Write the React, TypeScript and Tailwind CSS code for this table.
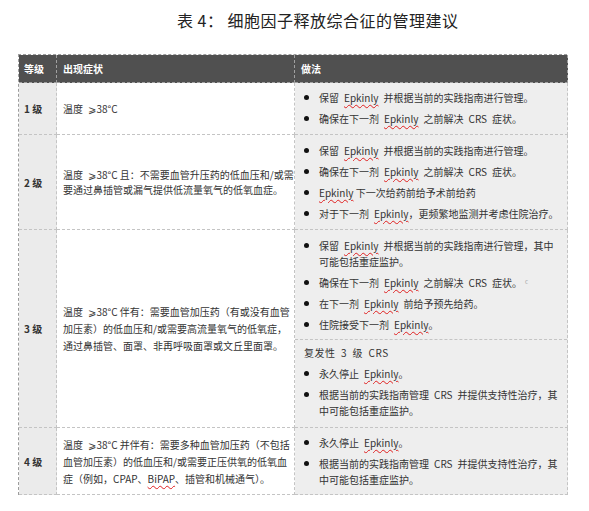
import React from "react";

const FONT = { fontFamily: '"Noto Sans CJK SC", "DejaVu Sans", sans-serif' };

const Ep = ({ children = "Epkinly" }: { children?: React.ReactNode }) => (
  <span className="underline decoration-wavy decoration-[#e02020] decoration-1 underline-offset-[2px]">
    {children}
  </span>
);

const S = "\u2002";

const Bullet = ({ children }: { children: React.ReactNode }) => (
  <div className="flex items-start">
    <div className="w-[24px] shrink-0 pl-[9px] h-[15px] flex items-center">
      <div className="w-[5px] h-[5px] rounded-full bg-[#111]" />
    </div>
    <div className="whitespace-nowrap leading-[16px]">{children}</div>
  </div>
);

const cellBase = "border-r border-b border-dashed border-[#c4c4c4]";
const c1 = `${cellBase} bg-[#ebebeb] flex items-center pl-[5px] font-bold text-[#333]`;
const c2 = `${cellBase} bg-white flex items-center pl-[6px] text-[#333]`;
const c3 = `${cellBase} bg-[#eeeeee] flex flex-col justify-center gap-[5px] text-[#333]`;

export default function App() {
  return (
    <div className="w-[589px] h-[511px] bg-white text-[10px]" style={FONT}>
      <div className="pl-[177px] pt-[8px] text-[16px] leading-[24px] tracking-[0.5px] text-[#222]">
        表 4： 细胞因子释放综合征的管理建议
      </div>
      <div className="mt-[22px] ml-[18px] w-[549px] grid grid-cols-[38px_238px_273px] grid-rows-[28px_52px_95px_198px_67px] border-l border-t border-dashed border-[#9c9c9c]">
        {/* header */}
        <div className="bg-[#505050] border-r border-b border-dashed border-[#a0a0a0] flex items-center pl-[5px] text-white font-bold">
          等级
        </div>
        <div className="bg-[#505050] border-r border-b border-dashed border-[#a0a0a0] flex items-center pl-[6px] text-white font-bold">
          出现症状
        </div>
        <div className="bg-[#505050] border-r border-b border-dashed border-[#a0a0a0] flex items-center pl-[6px] text-white font-bold">
          做法
        </div>

        {/* row 1 */}
        <div className={c1}>1 级</div>
        <div className={c2}>温度{S}⩾38°C</div>
        <div className={c3}>
          <Bullet>保留{S}<Ep />{S}并根据当前的实践指南进行管理。</Bullet>
          <Bullet>确保在下一剂{S}<Ep />{S}之前解决{S}CRS{S}症状。</Bullet>
        </div>

        {/* row 2 */}
        <div className={c1}>2 级</div>
        <div className={c2}>
          <div className="leading-[15px] whitespace-nowrap">
            <div>温度{S}⩾38°C 且：不需要血管升压药的低血压和/或需</div>
            <div>要通过鼻插管或漏气提供低流量氧气的低氧血症。</div>
          </div>
        </div>
        <div className={c3}>
          <Bullet>保留{S}<Ep />{S}并根据当前的实践指南进行管理。</Bullet>
          <Bullet>确保在下一剂{S}<Ep />{S}之前解决{S}CRS{S}症状。</Bullet>
          <Bullet><Ep /> 下一次给药前给予术前给药</Bullet>
          <Bullet>对于下一剂{S}<Ep />，更频繁地监测并考虑住院治疗。</Bullet>
        </div>

        {/* row 3 */}
        <div className={c1}>3 级</div>
        <div className={c2}>
          <div className="leading-[17px] whitespace-nowrap">
            <div>温度{S}⩾38°C 伴有：需要血管加压药（有或没有血管</div>
            <div>加压素）的低血压和/或需要高流量氧气的低氧症，</div>
            <div>通过鼻插管、面罩、非再呼吸面罩或文丘里面罩。</div>
          </div>
        </div>
        <div className="border-r border-b border-dashed border-[#c4c4c4] bg-[#eeeeee] flex flex-col text-[#333]">
          <div className="h-[110px] border-b border-dashed border-[#c4c4c4] flex flex-col justify-center gap-[5px] pt-[1px]">
            <Bullet>
              保留{S}<Ep />{S}并根据当前的实践指南进行管理，其中
              <br />
              可能包括重症监护。
            </Bullet>
            <Bullet>
              确保在下一剂{S}<Ep />{S}之前解决{S}CRS{S}症状。
              <sup className="text-[6px] text-[#aaa] ml-[3px]">c</sup>
            </Bullet>
            <Bullet>在下一剂{S}<Ep />{S}前给予预先给药。</Bullet>
            <Bullet>住院接受下一剂{S}<Ep />。</Bullet>
          </div>
          <div className="flex-1 flex flex-col justify-center gap-[5px] pb-[4px]">
            <div className="pl-[9px] leading-[16px] tracking-[0.5px]">复发性{S}3{S}级{S}CRS</div>
            <Bullet>永久停止{S}<Ep />。</Bullet>
            <Bullet>
              根据当前的实践指南管理{S}CRS{S}并提供支持性治疗，其
              <br />
              中可能包括重症监护。
            </Bullet>
          </div>
        </div>

        {/* row 4 */}
        <div className={c1}>4 级</div>
        <div className={c2}>
          <div className="leading-[17px] whitespace-nowrap">
            <div>温度{S}⩾38°C 并伴有：需要多种血管加压药（不包括</div>
            <div>血管加压素）的低血压和/或需要正压供氧的低氧血</div>
            <div>症（例如，CPAP、<Ep>BiPAP</Ep>、插管和机械通气）。</div>
          </div>
        </div>
        <div className={c3}>
          <Bullet>永久停止{S}<Ep />。</Bullet>
          <Bullet>
            根据当前的实践指南管理{S}CRS{S}并提供支持性治疗，其
            <br />
            中可能包括重症监护。
          </Bullet>
        </div>
      </div>
    </div>
  );
}
